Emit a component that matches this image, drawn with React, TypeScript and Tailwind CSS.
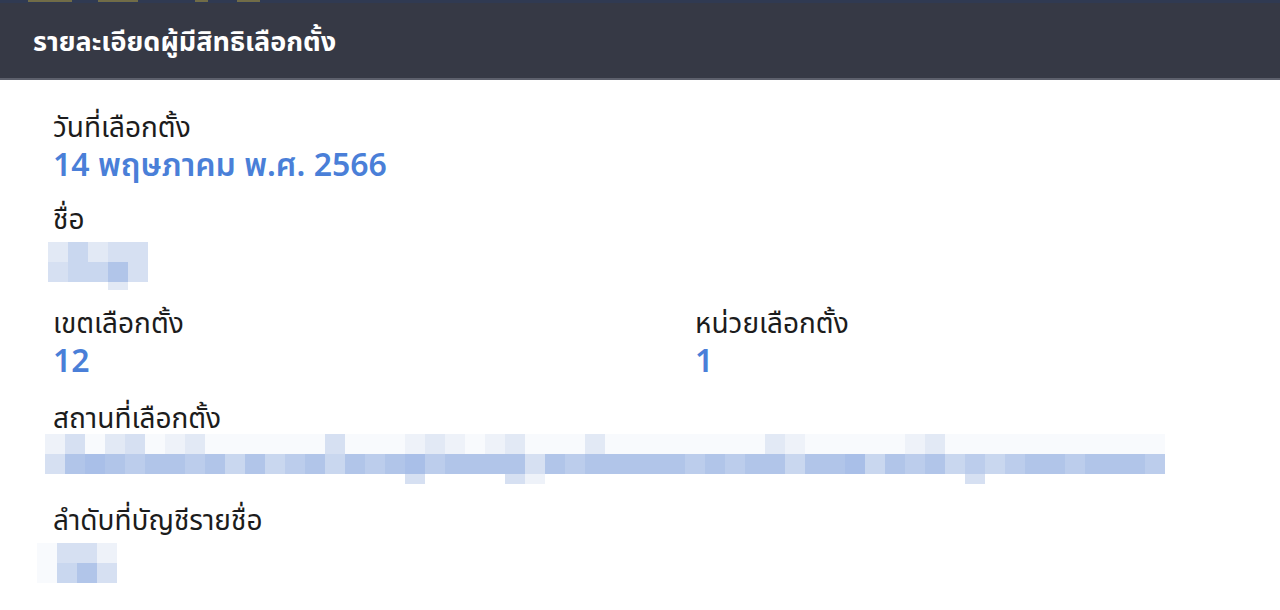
import React from 'react';

// Mosaic palette: index 0 is plain white, higher numbers are darker blues
const SHADES = [
    'bg-[#ffffff]',
    'bg-[#f8fafd]',
    'bg-[#eef2f9]',
    'bg-[#e2e9f5]',
    'bg-[#d6e0f2]',
    'bg-[#c9d7ef]',
    'bg-[#bccdec]',
    'bg-[#b1c5e9]',
    'bg-[#a9bfe8]',
];

const NAME_MASK = ['35344', '45574', '00030'];
const PLACE_MASK = [
    '24134123111111411123212311131111111132111112311111111111',
    '47876776757567576786777747677777676775778576756567767776',
    '00000000000000000040000420000000000000000000004000000000',
];
const ORDER_MASK = ['1442', '1574'];

function Mask({ rows, rowHeights }: { rows: string[]; rowHeights: string[] }) {
    return (
        <div className="flex flex-col">
            {rows.map((row, r) => (
                <div key={r} className={`flex ${rowHeights[r]}`}>
                    {row.split('').map((c, i) => (
                        <div key={i} className={`w-5 h-full ${SHADES[Number(c)]}`} />
                    ))}
                </div>
            ))}
        </div>
    );
}

function Label({ text }: { text: string }) {
    return <p className="text-[28px] leading-[36px] text-[#1c1c1c]">{text}</p>;
}

function Value({ text }: { text: string }) {
    return <p className="text-[32px] leading-[40px] font-semibold text-[#4a7fd8]">{text}</p>;
}

export default function App() {
    return (
        <div className="w-[1280px] h-[610px] bg-white overflow-hidden font-['Noto_Sans','Noto_Sans_Thai',Tahoma,sans-serif]">
            {/* Header bar */}
            <div className="bg-[#363945] border-b-2 border-[#5d606c]">
                <div className="h-[3px] bg-[#303a52] flex items-start">
                    <span className="ml-[28px] w-[44px] h-[2px] bg-[#716c47]" />
                    <span className="ml-[26px] w-[40px] h-[2px] bg-[#716c47]" />
                    <span className="ml-[57px] w-[13px] h-[2px] bg-[#716c47]" />
                    <span className="ml-[29px] w-[23px] h-[2px] bg-[#716c47]" />
                </div>
                <h1 className="h-[75px] flex items-center px-[33px] pt-[2px] text-[27px] font-bold text-white">
                    รายละเอียดผู้มีสิทธิเลือกตั้ง
                </h1>
            </div>

            <div className="pl-[53px] pt-[28px] flex flex-col">
                <Label text="วันที่เลือกตั้ง" />
                <Value text="14 พฤษภาคม พ.ศ. 2566" />

                <div className="mt-[16px]">
                    <Label text="ชื่อ" />
                    <div className="-ml-[5px] mt-[6px]">
                        <Mask rows={NAME_MASK} rowHeights={['h-5', 'h-5', 'h-[8px]']} />
                    </div>
                </div>

                <div className="grid grid-cols-[642px_1fr] mt-[14px]">
                    <div>
                        <Label text="เขตเลือกตั้ง" />
                        <Value text="12" />
                    </div>
                    <div>
                        <Label text="หน่วยเลือกตั้ง" />
                        <Value text="1" />
                    </div>
                </div>

                <div className="mt-[19px]">
                    <Label text="สถานที่เลือกตั้ง" />
                    <div className="-ml-[8px] -mt-[1px]">
                        <Mask rows={PLACE_MASK} rowHeights={['h-5', 'h-5', 'h-[10px]']} />
                    </div>
                </div>

                <div className="mt-[17px]">
                    <Label text="ลำดับที่บัญชีรายชื่อ" />
                    <div className="-ml-[16px] mt-[6px]">
                        <Mask rows={ORDER_MASK} rowHeights={['h-5', 'h-5']} />
                    </div>
                </div>
            </div>
        </div>
    );
}
